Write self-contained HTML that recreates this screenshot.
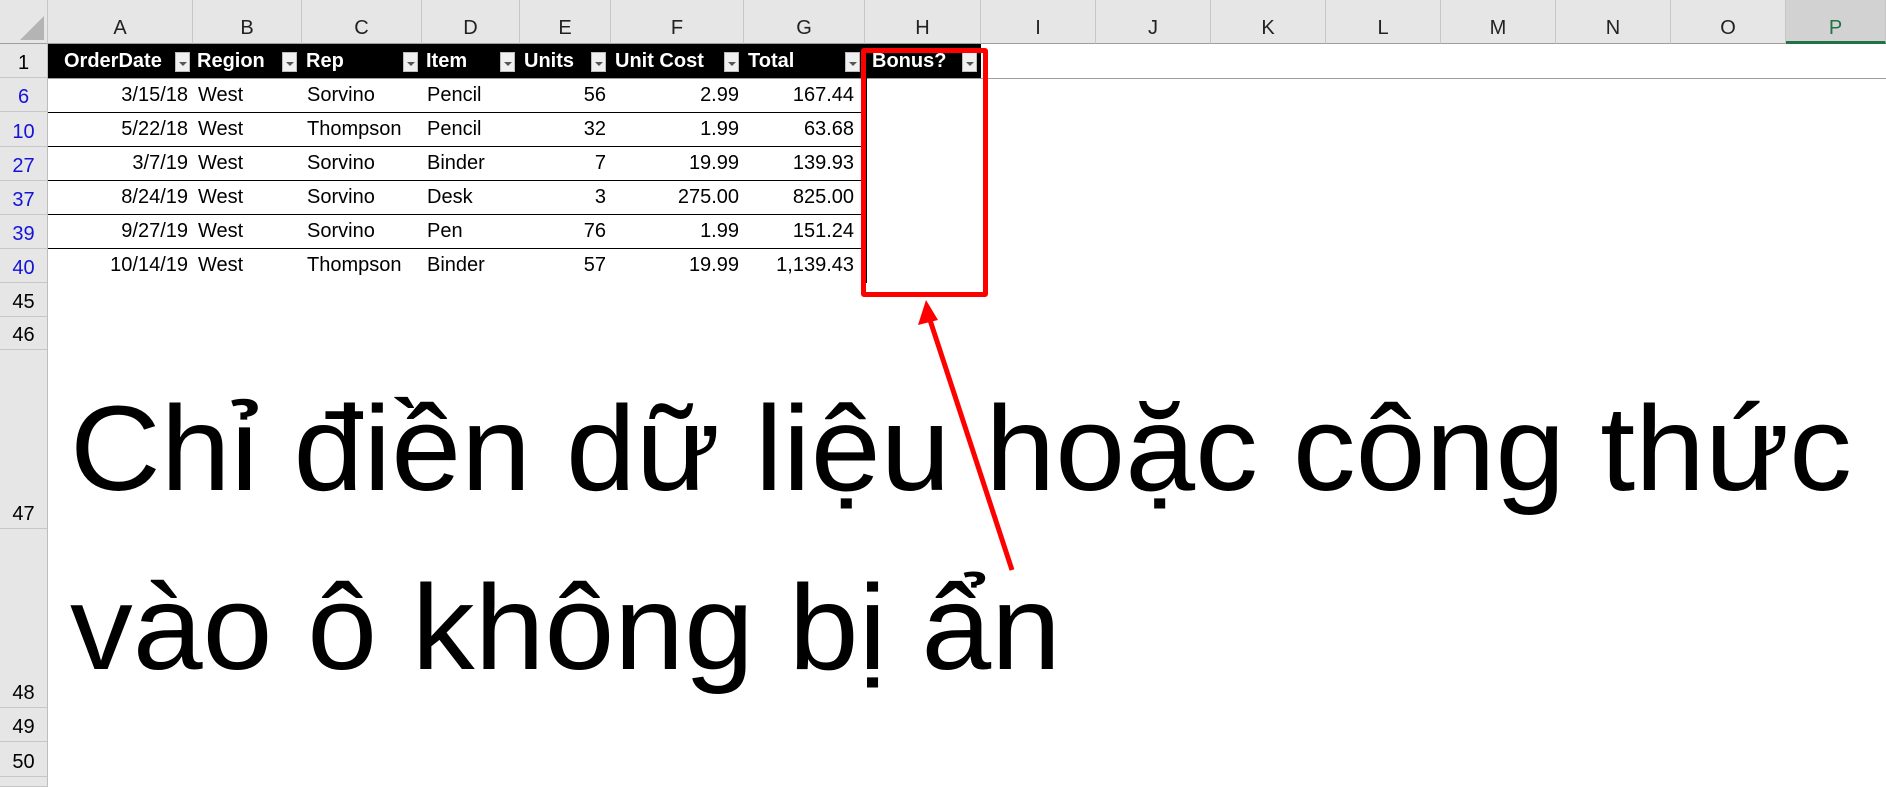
<!DOCTYPE html>
<html><head><meta charset="utf-8"><style>
*{margin:0;padding:0;box-sizing:border-box}
body{width:1886px;height:780px;overflow:hidden;background:#fff;position:relative;font-family:"Liberation Sans",sans-serif}
.a{position:absolute}
.ch{position:absolute;top:0;height:44px;background:#e6e6e6;border-right:1px solid #c6c6c6;border-bottom:1px solid #9e9e9e;font-size:20px;color:#222;text-align:center;line-height:56px}
.rh{position:absolute;left:0;width:48px;background:#e6e6e6;border-right:1px solid #bdbdbd;border-bottom:1px solid #c6c6c6;font-size:20px;text-align:center;color:#000}
.rh span{position:absolute;bottom:2px;left:0;right:0}
.b{color:#1414d8}
.c{position:absolute;font-size:20px;line-height:34px;white-space:nowrap}
.r{text-align:right}
.hd{position:absolute;top:44px;height:34px;color:#fff;font-weight:bold;font-size:20px;line-height:34px;padding-left:4px;white-space:nowrap;overflow:hidden}
.fb{position:absolute;top:52px;width:15px;height:20px;background:#f0f0f0;border:1px solid #bbb}
.fb:after{content:"";position:absolute;left:3px;top:9px;border-left:4px solid transparent;border-right:4px solid transparent;border-top:4px solid #555}
.ln{position:absolute;left:48px;width:817px;height:1px;background:#000}
</style></head><body>
<div class="a" style="left:0;top:0;width:1886px;height:10px;background:#e6e6e6"></div>
<div class="a" style="left:0;top:0;width:48px;height:44px;background:#e6e6e6;border-right:1px solid #c6c6c6;border-bottom:1px solid #9e9e9e"></div>
<div class="a" style="left:20px;top:16px;width:0;height:0;border-left:24px solid transparent;border-bottom:24px solid #b4b4b4"></div>
<div class="ch" style="left:48px;width:145px">A</div>
<div class="ch" style="left:193px;width:109px">B</div>
<div class="ch" style="left:302px;width:120px">C</div>
<div class="ch" style="left:422px;width:98px">D</div>
<div class="ch" style="left:520px;width:91px">E</div>
<div class="ch" style="left:611px;width:133px">F</div>
<div class="ch" style="left:744px;width:121px">G</div>
<div class="ch" style="left:865px;width:116px">H</div>
<div class="ch" style="left:981px;width:115px">I</div>
<div class="ch" style="left:1096px;width:115px">J</div>
<div class="ch" style="left:1211px;width:115px">K</div>
<div class="ch" style="left:1326px;width:115px">L</div>
<div class="ch" style="left:1441px;width:115px">M</div>
<div class="ch" style="left:1556px;width:115px">N</div>
<div class="ch" style="left:1671px;width:115px">O</div>
<div class="ch" style="left:1786px;width:100px;background:#d2d2d2;color:#217346;border-bottom:3px solid #217346">P</div>

<div class="rh" style="top:44px;height:34px"><span>1</span></div>
<div class="rh b" style="top:78px;height:34px"><span>6</span></div>
<div class="rh b" style="top:112px;height:35px"><span>10</span></div>
<div class="rh b" style="top:147px;height:34px"><span>27</span></div>
<div class="rh b" style="top:181px;height:34px"><span>37</span></div>
<div class="rh b" style="top:215px;height:34px"><span>39</span></div>
<div class="rh b" style="top:249px;height:34px"><span>40</span></div>
<div class="rh" style="top:283px;height:34px"><span>45</span></div>
<div class="rh" style="top:317px;height:33px"><span>46</span></div>
<div class="rh" style="top:350px;height:179px"><span>47</span></div>
<div class="rh" style="top:529px;height:179px"><span>48</span></div>
<div class="rh" style="top:708px;height:34px"><span>49</span></div>
<div class="rh" style="top:742px;height:35px"><span>50</span></div>
<div class="rh" style="top:777px;height:10px"></div>

<div class="a" style="left:48px;top:44px;width:933px;height:34px;background:#000"></div>
<div class="a" style="left:48px;top:78px;width:1838px;height:1px;background:#9e9e9e"></div>
<div class="hd" style="left:60px;width:133px">OrderDate</div>
<div class="hd" style="left:193px;width:109px">Region</div>
<div class="hd" style="left:302px;width:120px">Rep</div>
<div class="hd" style="left:422px;width:98px">Item</div>
<div class="hd" style="left:520px;width:91px">Units</div>
<div class="hd" style="left:611px;width:133px">Unit Cost</div>
<div class="hd" style="left:744px;width:121px">Total</div>
<div class="hd" style="left:868px;width:113px">Bonus?</div>
<div class="fb" style="left:175px"></div>
<div class="fb" style="left:282px"></div>
<div class="fb" style="left:403px"></div>
<div class="fb" style="left:500px"></div>
<div class="fb" style="left:591px"></div>
<div class="fb" style="left:724px"></div>
<div class="fb" style="left:845px"></div>
<div class="fb" style="left:962px"></div>

<div class="ln" style="top:112px"></div><div class="ln" style="top:146px"></div>
<div class="ln" style="top:180px"></div><div class="ln" style="top:214px"></div>
<div class="ln" style="top:248px"></div>

<div class="c r" style="left:48px;width:140px;top:78px">3/15/18<br>5/22/18<br>3/7/19<br>8/24/19<br>9/27/19<br>10/14/19</div>
<div class="c" style="left:198px;top:78px">West<br>West<br>West<br>West<br>West<br>West</div>
<div class="c" style="left:307px;top:78px">Sorvino<br>Thompson<br>Sorvino<br>Sorvino<br>Sorvino<br>Thompson</div>
<div class="c" style="left:427px;top:78px">Pencil<br>Pencil<br>Binder<br>Desk<br>Pen<br>Binder</div>
<div class="c r" style="left:520px;width:86px;top:78px">56<br>32<br>7<br>3<br>76<br>57</div>
<div class="c r" style="left:611px;width:128px;top:78px">2.99<br>1.99<br>19.99<br>275.00<br>1.99<br>19.99</div>
<div class="c r" style="left:744px;width:110px;top:78px">167.44<br>63.68<br>139.93<br>825.00<br>151.24<br>1,139.43</div>

<div class="a" style="left:866px;top:78px;width:1px;height:205px;background:#000"></div>
<div class="a" style="left:861px;top:48px;width:127px;height:249px;border:5px solid #f00;border-radius:3px"></div>

<svg class="a" style="left:0;top:0" width="1886" height="780">
<text x="70" y="490" font-family="Liberation Sans, sans-serif" font-size="121" textLength="1782" lengthAdjust="spacingAndGlyphs">Chỉ điền dữ liệu  hoặc công thức</text>
<text x="70" y="669" font-family="Liberation Sans, sans-serif" font-size="121" textLength="991" lengthAdjust="spacingAndGlyphs">vào ô không bị ẩn</text>
<line x1="1012" y1="570" x2="930" y2="320" stroke="#f00" stroke-width="5"/>
<polygon points="926,300 918,325 938,320" fill="#f00"/>
</svg>
</body></html>
